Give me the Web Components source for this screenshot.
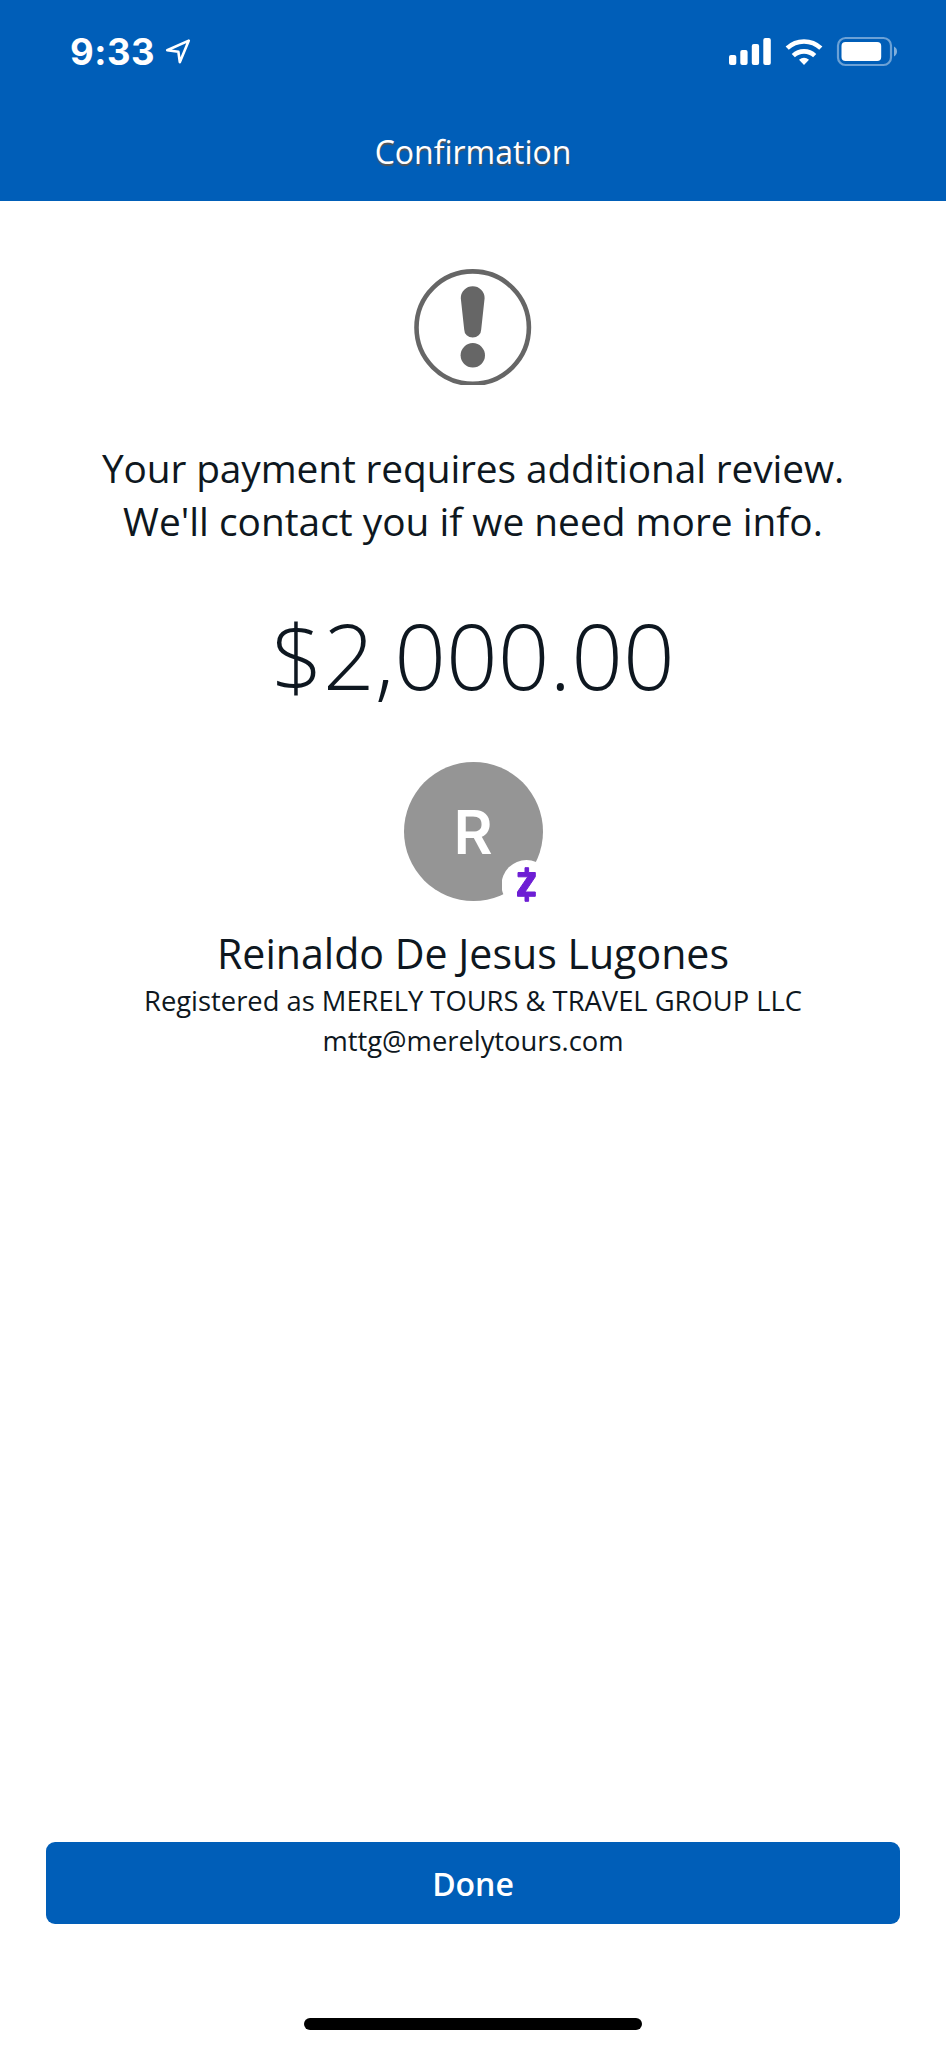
<!DOCTYPE html>
<html lang="en">
<head>
<meta charset="utf-8">
<title>Confirmation</title>
<style>
html,body{margin:0;background:#fff}
</style>
</head>
<body>
<confirmation-screen></confirmation-screen>
<script>
const define = (name, html) => {
  const t = document.createElement('template');
  t.innerHTML = html;
  customElements.define(name, class extends HTMLElement {
    constructor() {
      super();
      this.attachShadow({ mode: 'open' }).append(t.content.cloneNode(true));
    }
  });
};

define('status-bar', `
<style>
:host{display:flex;justify-content:space-between;height:104px;box-sizing:border-box;color:#fff}
.time{display:flex;padding-left:70px;font:700 36.5px/104px Inter,sans-serif;letter-spacing:.5px}
.time span{width:84px}
svg{display:block}
</style>
<div class="time"><span>9:33</span><svg width="40" height="104" viewBox="154 0 40 104"><path d="M188.800 40.600 167.200 50.300 178.400 51.800 179.800 62.200Z" fill="none" stroke="#fff" stroke-width="2.6" stroke-linejoin="round"/></svg></div>
<svg width="226" height="104" viewBox="720 0 226 104" fill="#fff">
<rect x="729" y="55" width="7.3" height="10" rx="2"/><rect x="740.3" y="50" width="7.3" height="15" rx="2"/><rect x="751.8" y="44" width="7.3" height="21" rx="2"/><rect x="763.3" y="38" width="7.5" height="27" rx="2"/>
<path d="M804 65l-5-5.2a8 8 0 0 1 10 0z"/>
<g fill="none" stroke="#fff" stroke-width="4.6"><path d="M793.3 55.7a15.5 15.5 0 0 1 21.4 0"/><path d="M787.2 48.2a24.5 24.5 0 0 1 33.6 0"/></g>
<rect x="838" y="38" width="53" height="27" rx="7.5" fill="none" stroke="#fff" stroke-opacity=".42" stroke-width="2.2"/>
<rect x="841.5" y="42" width="39.7" height="19" rx="4"/>
<path d="M894 46.6q3 1.6 3 4.9t-3 4.9z" opacity=".5"/>
</svg>`);

define('nav-bar', `
<style>
:host{display:block;height:97px;text-align:center;color:#fff;font:32px/96px "Open Sans",sans-serif;text-shadow:0 2px 1px #555}
</style><slot></slot>`);

define('alert-icon', `
<style>:host{display:block}svg{display:block;margin:auto}</style>
<svg width="118" height="116" viewBox="414 269 118 116"><circle cx="472.7" cy="327.6" r="56.2" fill="none" stroke="#666" stroke-width="4.6"/><path d="M460.8 298.2a11.9 11.9 0 0 1 23.8 0L481.2 329.500a8.500 8 0 0 1-17 0Z" fill="#666"/><circle cx="472.800" cy="355.300" r="12.200" fill="#666"/></svg>`);

define('payee-avatar', `
<style>
:host{display:block;position:relative;width:139px;height:139px;border-radius:50%;background:#959595;color:#fff;text-align:center;font:600 60px/141px Inter,sans-serif}
svg{position:absolute;left:98px;top:98px}
</style><slot></slot>
<svg width="50" height="50" viewBox="501.500 860 50 50"><circle cx="526" cy="885" r="25" fill="#fff"/><path fill="#6d1ed4" stroke="#6d1ed4" stroke-width="1" stroke-linejoin="round" d="M524.500 867.700h3.600v4.800h6.700v4.200l-10.300 15.300h10.300v4.300h-6.700v5h-3.600v-5h-7.500v-4.400l10.300-15.100h-9.800v-4.300h7z"/></svg>`);

define('payee-card', `
<style>
:host{display:flex;flex-direction:column;align-items:center}
.name{margin-top:24px;font-size:41.1px;line-height:56px}
.info{font-size:27.35px;line-height:40px}
</style>
<payee-avatar><slot name="initial"></slot></payee-avatar>
<div class="name"><slot name="name"></slot></div>
<div class="info"><slot name="legal"></slot></div>
<div class="info"><slot name="email"></slot></div>`);

define('primary-button', `
<style>
:host{display:block}
button{display:block;width:100%;height:82px;padding:0;border:0;border-radius:9px;background:#005eb8;color:#fff;font:600 32px/84px "Open Sans",sans-serif}
</style><button><slot></slot></button>`);

define('home-indicator', `
<style>:host{display:block;width:338px;height:11.500px;border-radius:6px;background:#000}</style>`);

define('confirmation-screen', `
<style>
:host{display:flex;flex-direction:column;width:946px;height:2048px;background:#fff;color:#0e1720;font-family:"Open Sans",sans-serif;white-space:nowrap}
header{background:#005eb8;height:201px}
main{flex:1;padding-top:68px;text-align:center}
.msg{margin-top:56px;font-size:38.85px;line-height:53px}
.msg span:first-child{letter-spacing:-.11px}
.amount{margin-top:48px;height:120px;font-size:90.7px;font-weight:300;line-height:120px}
payee-card{margin-top:47px}
footer{display:flex;flex-direction:column;align-items:center;height:206px}
primary-button{width:854px;margin-bottom:94px}
</style>
<header><status-bar></status-bar><nav-bar><span>Confirmation</span></nav-bar></header>
<main>
<alert-icon></alert-icon>
<div class="msg"><span>Your payment requires additional review.</span><br><span>We'll contact you if we need more info.</span></div>
<div class="amount"><span>$2,000.00</span></div>
<payee-card><span slot="initial">R</span><span slot="name">Reinaldo De Jesus Lugones</span><span slot="legal">Registered as MERELY TOURS &amp; TRAVEL GROUP LLC</span><span slot="email">mttg@merelytours.com</span></payee-card>
</main>
<footer><primary-button><span>Done</span></primary-button><home-indicator></home-indicator></footer>`);
</script>
</body>
</html>
